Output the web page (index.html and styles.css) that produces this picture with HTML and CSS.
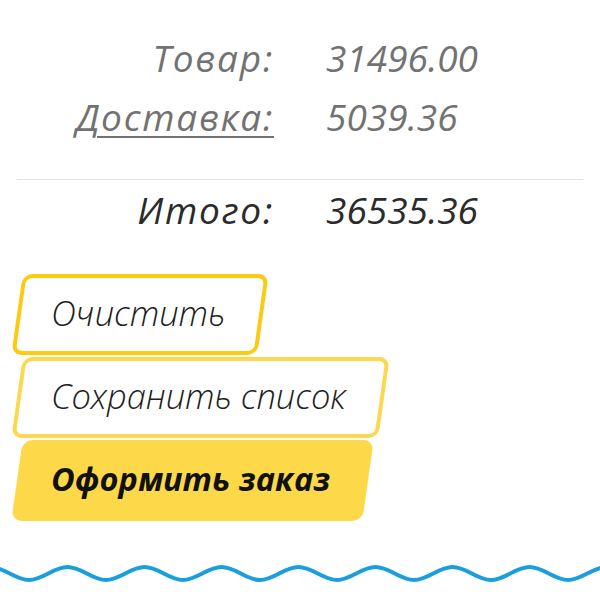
FILE: index.html
```html
<!DOCTYPE html>
<html lang="ru">
<head>
<meta charset="utf-8">
<title>Корзина</title>
<link rel="stylesheet" href="styles.css">
</head>
<body>
<main class="page">
  <section class="summary">
    <div class="row">
      <span class="label">Товар:</span>
      <span class="value">31496.00</span>
    </div>
    <div class="row">
      <a class="label link" href="#">Доставка:</a>
      <span class="value">5039.36</span>
    </div>
    <hr class="divider">
    <div class="row total">
      <span class="label">Итого:</span>
      <span class="value">36535.36</span>
    </div>
  </section>
  <section class="actions">
    <button class="btn btn-clear" type="button"><span class="btn-text">Очистить</span></button>
    <button class="btn btn-save" type="button"><span class="btn-text">Сохранить список</span></button>
    <button class="btn btn-order" type="button"><span class="btn-text">Оформить заказ</span></button>
  </section>
</main>
<svg class="wave" width="600" height="26" viewBox="0 0 600 26" aria-hidden="true">
  <path d="M -48 19 c 14 0 24.5 -13 38.5 -13 s 24.5 13 38.5 13 s 24.5 -13 38.5 -13 s 24.5 13 38.5 13 s 24.5 -13 38.5 -13 s 24.5 13 38.5 13 s 24.5 -13 38.5 -13 s 24.5 13 38.5 13 s 24.5 -13 38.5 -13 s 24.5 13 38.5 13 s 24.5 -13 38.5 -13 s 24.5 13 38.5 13 s 24.5 -13 38.5 -13 s 24.5 13 38.5 13 s 24.5 -13 38.5 -13 s 24.5 13 38.5 13 s 24.5 -13 38.5 -13 s 24.5 13 38.5 13 s 24.5 -13 38.5 -13" fill="none" stroke="#1b9fdc" stroke-width="4"/>
</svg>
</body>
</html>
```
FILE: styles.css
```css
html, body {
  margin: 0;
  padding: 0;
  background: #ffffff;
}

body {
  font-family: "Open Sans", "Noto Sans", sans-serif;
  font-style: italic;
}

.page {
  padding: 28px 17px 0 17px;
}

.summary {
  display: flex;
  flex-direction: column;
}

.row {
  display: grid;
  grid-template-columns: 255px 1fr;
  column-gap: 54px;
  font-size: 37px;
  font-weight: 380;
  line-height: 59px;
  color: #727272;
}

.label {
  text-align: right;
  color: inherit;
  letter-spacing: 1.8px;
  margin-right: -2px;
}

.link {
  text-decoration: underline;
  text-decoration-thickness: 2px;
  text-underline-offset: 5px;
}

.divider {
  border: 0;
  border-top: 1px solid #e3e3e3;
  margin: 33px 0 0 0;
  height: 0;
}

.total {
  color: #2b2b2b;
}

.actions {
  display: flex;
  flex-direction: column;
  align-items: flex-start;
  gap: 2px;
  margin-top: 35px;
}

.btn {
  position: relative;
  font-family: inherit;
  font-style: italic;
  font-size: 34.5px;
  font-weight: 300;
  line-height: 40px;
  color: #1e1e1e;
  background: transparent;
  border: 0;
  padding: 19px 38px 22px 34px;
  margin: 0;
  cursor: pointer;
}

.btn::before {
  content: "";
  position: absolute;
  inset: 0;
  border-radius: 10px;
  transform: skewX(-8deg);
  box-sizing: border-box;
}

.btn-text {
  position: relative;
}

.btn-clear::before {
  border: 4px solid #fbcb12;
  background: #ffffff;
}

.btn-save::before {
  border: 4px solid #fbd84f;
  background: #ffffff;
}

.btn-order {
  font-size: 32.5px;
  font-weight: 700;
  color: #111111;
}

.btn-order::before {
  background: #fdd94a;
}

.wave {
  display: block;
  margin-top: 40px;
}
```
